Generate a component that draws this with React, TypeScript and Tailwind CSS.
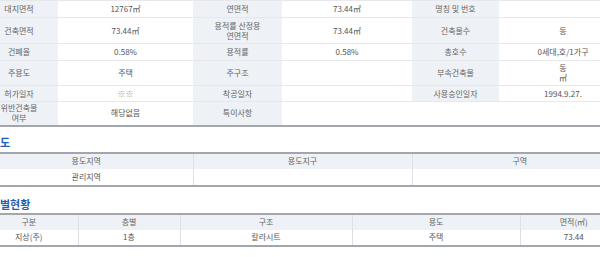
import React from "react"

const th = "bg-[#eef1f5] text-[#666] font-normal text-center align-middle"
const td = "text-center align-middle text-[#555]"

function Row({ h, children }: { h: string; children: React.ReactNode }) {
  return <tr className={`${h} border-b border-[#e6e8eb]`}>{children}</tr>
}

export default function App() {
  return (
    <div className="w-[600px] h-[257px] overflow-hidden bg-white font-['Noto_Sans_CJK_KR','Noto_Sans',sans-serif] text-[8px] leading-[10px]">
      <div className="-ml-[20px] w-[647px]">
        {/* 건축물 현황 */}
        <table className="w-full table-fixed border-collapse border-t border-b-2 border-t-[#e6e8eb] border-b-[#a3a7ad]">
          <colgroup>
            <col className="w-[78px]" />
            <col className="w-[135px]" />
            <col className="w-[89px]" />
            <col className="w-[130px]" />
            <col className="w-[87px]" />
            <col className="w-[128px]" />
          </colgroup>
          <tbody>
            <Row h="h-[17px]">
              <th className={th}>대지면적</th>
              <td className={td}>12767㎡</td>
              <th className={th}>연면적</th>
              <td className={td}>73.44㎡</td>
              <th className={th}>명칭 및 번호</th>
              <td className={td}></td>
            </Row>
            <Row h="h-[26px]">
              <th className={th}>건축면적</th>
              <td className={td}>73.44㎡</td>
              <th className={th}>
                용적률 산정용
                <br />
                연면적
              </th>
              <td className={td}>73.44㎡</td>
              <th className={th}>건축물수</th>
              <td className={td}>동</td>
            </Row>
            <Row h="h-[17px]">
              <th className={th}>건폐율</th>
              <td className={td}>0.58%</td>
              <th className={th}>용적률</th>
              <td className={td}>0.58%</td>
              <th className={th}>총호수</th>
              <td className={td}>0세대,호/1가구</td>
            </Row>
            <Row h="h-[25px]">
              <th className={th}>주용도</th>
              <td className={td}>주택</td>
              <th className={th}>주구조</th>
              <td className={td}></td>
              <th className={th}>부속건축물</th>
              <td className={td}>
                동
                <br />㎡
              </td>
            </Row>
            <Row h="h-[16px]">
              <th className={th}>허가일자</th>
              <td className={`${td} text-[#999]`}>※※</td>
              <th className={th}>착공일자</th>
              <td className={td}></td>
              <th className={th}>사용승인일자</th>
              <td className={td}>1994.9.27.</td>
            </Row>
            <tr className="h-[24px]">
              <th className={th}>
                위반건축물
                <br />
                여부
              </th>
              <td className={td}>해당없음</td>
              <th className={th}>특이사항</th>
              <td className={td} colSpan={3}></td>
            </tr>
          </tbody>
        </table>

        {/* 지역지구도 */}
        <div className="h-[25px] flex items-end pb-[3px] pl-[20px]">
          <h3 className="text-[11px] leading-[13px] font-bold text-[#1f5fb5]">도</h3>
        </div>
        <table className="w-full table-fixed border-collapse border-t-2 border-b-2 border-[#a3a7ad]">
          <colgroup>
            <col className="w-[213px]" />
            <col className="w-[219px]" />
            <col className="w-[215px]" />
          </colgroup>
          <thead>
            <tr className="h-[16px] bg-[#eef1f5]">
              <th className="font-normal text-[#666] border-r border-[#dde0e4]">용도지역</th>
              <th className="font-normal text-[#666] border-r border-[#dde0e4]">용도지구</th>
              <th className="font-normal text-[#666]">구역</th>
            </tr>
          </thead>
          <tbody>
            <tr className="h-[17px]">
              <td className={`${td} border-r border-[#dde0e4]`}>관리지역</td>
              <td className={`${td} border-r border-[#dde0e4]`}></td>
              <td className={td}></td>
            </tr>
          </tbody>
        </table>

        {/* 층별현황 */}
        <div className="h-[26px] flex items-end pb-[2px] pl-[20px]">
          <h3 className="text-[11px] leading-[13px] font-bold text-[#1f5fb5]">별현황</h3>
        </div>
        <table className="w-full table-fixed border-collapse border-t-2 border-b-2 border-[#a3a7ad]">
          <colgroup>
            <col className="w-[98px]" />
            <col className="w-[102px]" />
            <col className="w-[172px]" />
            <col className="w-[168px]" />
            <col className="w-[107px]" />
          </colgroup>
          <thead>
            <tr className="h-[16px] bg-[#eef1f5]">
              <th className="font-normal text-[#666] border-r border-[#dde0e4]">구분</th>
              <th className="font-normal text-[#666] border-r border-[#dde0e4]">층별</th>
              <th className="font-normal text-[#666] border-r border-[#dde0e4]">구조</th>
              <th className="font-normal text-[#666] border-r border-[#dde0e4]">용도</th>
              <th className="font-normal text-[#666]">면적(㎡)</th>
            </tr>
          </thead>
          <tbody>
            <tr className="h-[16px]">
              <td className={`${td} border-r border-[#dde0e4]`}>지상(주)</td>
              <td className={`${td} border-r border-[#dde0e4]`}>1층</td>
              <td className={`${td} border-r border-[#dde0e4]`}>칼라시트</td>
              <td className={`${td} border-r border-[#dde0e4]`}>주택</td>
              <td className={td}>73.44</td>
            </tr>
          </tbody>
        </table>
      </div>
    </div>
  )
}
